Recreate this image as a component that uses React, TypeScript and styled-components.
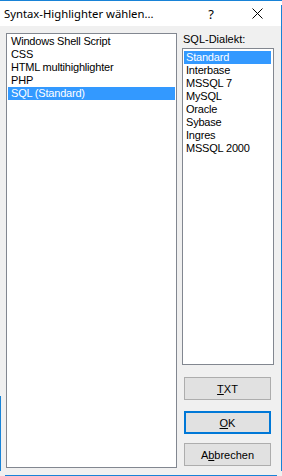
import React, { useState } from "react";
import styled, { createGlobalStyle } from "styled-components";

const GlobalStyle = createGlobalStyle`
  html, body { margin: 0; padding: 0; background: #ffffff; }
  * { box-sizing: border-box; }
`;

const Window = styled.div`
  position: relative;
  width: 282px;
  height: 476px;
  background: #f0f0f0;
  border-top: 1px solid #1883d7;
  display: flex;
  flex-direction: column;
  overflow: hidden;
  &::before {
    content: "";
    position: absolute;
    right: 0;
    top: 4px;
    bottom: 5px;
    width: 1px;
    background: #1883d7;
  }
  &::after {
    content: "";
    position: absolute;
    left: 5px;
    right: 5px;
    bottom: 0;
    height: 1px;
    background: #1883d7;
  }
`;

const LeftEdge = styled.div`
  position: absolute;
  left: 0;
  top: 395px;
  bottom: 5px;
  width: 1px;
  background: #1883d7;
`;

const TitleBar = styled.div`
  height: 25px;
  background: #ffffff;
  display: flex;
  align-items: center;
  flex-shrink: 0;
`;

const Title = styled.div`
  flex: 1;
  padding-left: 4px;
  font-family: "Noto Sans", "Open Sans", sans-serif;
  font-size: 11.3px;
  color: #000;
  white-space: nowrap;
`;

const HelpGlyph = styled.div`
  width: 46px;
  text-align: center;
  font-family: "Noto Sans", sans-serif;
  font-size: 13px;
  color: #000;
`;

const CloseButton = styled.div`
  width: 46px;
  height: 25px;
  display: flex;
  align-items: center;
  justify-content: center;
  margin-right: 2px;
`;

const Body = styled.div`
  flex: 1;
  display: flex;
  gap: 5px;
  padding: 7px 8px 6px 6px;
  min-height: 0;
`;

const ListBox = styled.div`
  background: #ffffff;
  border: 1px solid #828790;
  padding: 1px;
  font-family: "Liberation Sans", Arial, sans-serif;
  font-size: 11px;
  letter-spacing: -0.2px;
  color: #000;
`;

const LeftList = styled(ListBox)`
  width: 171px;
  height: 435px;
`;

const DialectList = styled(ListBox)`
  width: 92px;
  height: 317px;
  padding: 2px 2px 1px 1px;
`;

const Item = styled.div<{ $selected?: boolean; $pad?: number }>`
  height: 13px;
  line-height: 13px;
  padding-left: ${(p) => p.$pad ?? 3}px;
  white-space: nowrap;
  background: ${(p) => (p.$selected ? "#3399ff" : "transparent")};
  color: ${(p) => (p.$selected ? "#ffffff" : "#000000")};
  cursor: default;
`;

const RightColumn = styled.div`
  display: flex;
  flex-direction: column;
  width: 92px;
`;

const Label = styled.div`
  font-family: "Liberation Sans", Arial, sans-serif;
  font-size: 11px;
  color: #000;
  height: 15px;
  line-height: 13px;
  padding-left: 1px;
`;

const ButtonStack = styled.div`
  display: flex;
  flex-direction: column;
  gap: 9px;
  margin-top: 12px;
  padding-left: 2px;
`;

const Button = styled.button<{ $default?: boolean }>`
  width: 87px;
  height: 23px;
  background: #e1e1e1;
  border: ${(p) => (p.$default ? "2px solid #0078d7" : "1px solid #adadad")};
  margin: ${(p) => (p.$default ? "2px 0 0 0" : "0")};
  font-family: "Liberation Sans", Arial, sans-serif;
  font-size: 11px;
  color: #000;
  padding: 0;
  display: flex;
  align-items: center;
  justify-content: center;
  & u { text-decoration: underline; text-underline-offset: 1px; }
`;

const languages = [
  "Windows Shell Script",
  "CSS",
  "HTML multihighlighter",
  "PHP",
  "SQL (Standard)",
];

const dialects = [
  "Standard",
  "Interbase",
  "MSSQL 7",
  "MySQL",
  "Oracle",
  "Sybase",
  "Ingres",
  "MSSQL 2000",
];

export default function App() {
  const [lang, setLang] = useState(4);
  const [dialect, setDialect] = useState(0);
  return (
    <>
      <GlobalStyle />
      <Window>
        <LeftEdge />
        <TitleBar>
          <Title>Syntax-Highlighter wählen...</Title>
          <HelpGlyph>?</HelpGlyph>
          <CloseButton>
            <svg width="11" height="11" viewBox="0 0 11 11">
              <path d="M0.5 0.5 L10.5 10.5 M10.5 0.5 L0.5 10.5" stroke="#000" strokeWidth="1" fill="none" />
            </svg>
          </CloseButton>
        </TitleBar>
        <Body>
          <LeftList>
            {languages.map((l, i) => (
              <Item key={l} $selected={i === lang} onClick={() => setLang(i)}>
                {l}
              </Item>
            ))}
          </LeftList>
          <RightColumn>
            <Label>SQL-Dialekt:</Label>
            <DialectList>
              {dialects.map((d, i) => (
                <Item key={d} $pad={2} $selected={i === dialect} onClick={() => setDialect(i)}>
                  {d}
                </Item>
              ))}
            </DialectList>
            <ButtonStack>
              <Button>
                <span><u>T</u>XT</span>
              </Button>
              <Button $default>
                <span><u>O</u>K</span>
              </Button>
              <Button>
                <span>A<u>b</u>brechen</span>
              </Button>
            </ButtonStack>
          </RightColumn>
        </Body>
      </Window>
    </>
  );
}
